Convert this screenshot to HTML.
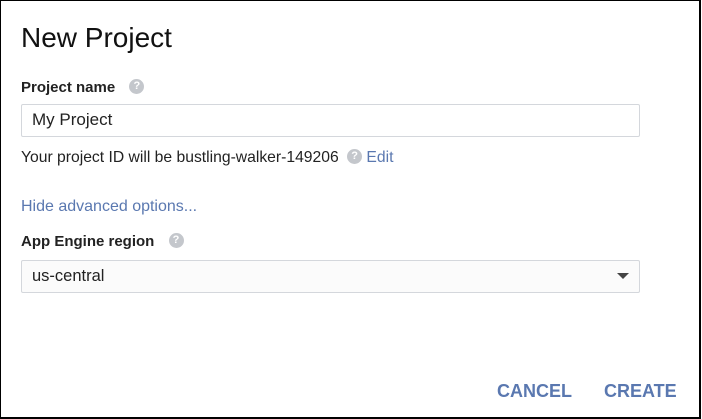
<!DOCTYPE html>
<html><head><style>
body{margin:0;width:702px;height:419px;background:#fff;font-family:"Liberation Sans",sans-serif;overflow:hidden}
.frame{position:absolute;left:0;top:0;width:698px;height:416px;border:1px solid #000;border-right:2px solid #000;border-bottom:2px solid #000}
.t{position:absolute;white-space:nowrap}
.q{display:inline-block;width:15px;height:15px;border-radius:50%;background:#c4c7cc;color:#fff;font-size:11px;font-weight:bold;text-align:center;line-height:15px;vertical-align:middle}
.box{position:absolute;left:21px;width:617px;height:31px;border:1px solid #d4d7dc;border-radius:2px}
</style></head><body>
<div class="frame"></div>
<div class="t" style="left:21px;top:22px;font-size:28px;color:#111">New Project</div>
<div class="t" style="left:21px;top:79px;font-size:15px;font-weight:bold;color:#222">Project name <span class="q" style="margin-left:10px;margin-top:-3px">?</span></div>
<div class="box" style="top:104px"></div>
<div class="t" style="left:32px;top:110px;font-size:17px;color:#222">My Project</div>
<div class="t" style="left:21px;top:149px;font-size:15.7px;color:#222">Your project ID will be bustling-walker-149206 <span class="q" style="margin-left:4px;margin-top:-3px">?</span> <span style="color:#5a78b0">Edit</span></div>
<div class="t" style="left:21px;top:198px;font-size:16px;color:#5a78b0">Hide advanced options...</div>
<div class="t" style="left:21px;top:233px;font-size:15px;font-weight:bold;color:#222">App Engine region <span class="q" style="margin-left:10px;margin-top:-3px">?</span></div>
<div class="box" style="top:260px;background:#fbfbfb"></div>
<div class="t" style="left:32px;top:267px;font-size:16.5px;color:#222">us-central</div>
<div style="position:absolute;left:617px;top:273px;width:0;height:0;border-left:6px solid transparent;border-right:6px solid transparent;border-top:6px solid #444"></div>
<div class="t" style="left:497px;top:381px;font-size:18px;font-weight:bold;color:#5a78b0">CANCEL</div>
<div class="t" style="left:604px;top:381px;font-size:18px;font-weight:bold;color:#5a78b0">CREATE</div>
</body></html>
